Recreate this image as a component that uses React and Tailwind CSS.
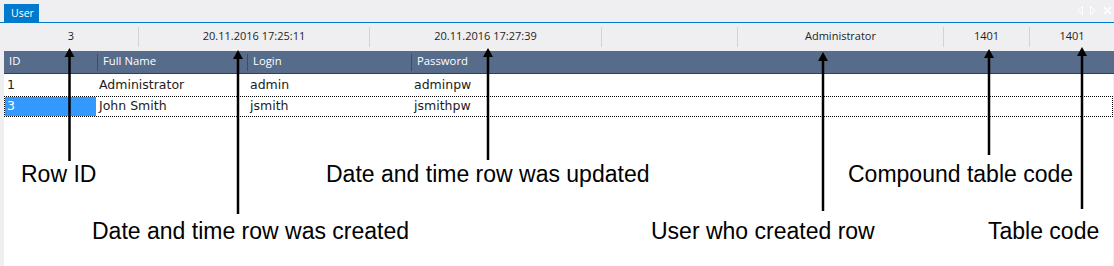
const statusCells = [
  { w: "w-[134px]", text: "3" },
  { w: "w-[231px]", text: "20.11.2016 17:25:11" },
  { w: "w-[232px]", text: "20.11.2016 17:27:39" },
  { w: "w-[136px]", text: "" },
  { w: "w-[206px]", text: "Administrator" },
  { w: "w-[86px]", text: "1401" },
  { w: "flex-1", text: "1401" },
];

const columns = [
  { title: "ID", w: "w-[93px]" },
  { title: "Full Name", w: "w-[150px]" },
  { title: "Login", w: "w-[164px]" },
  { title: "Password", w: "flex-1" },
];

const rows = [
  { id: "1", name: "Administrator", login: "admin", password: "adminpw" },
  { id: "3", name: "John Smith", login: "jsmith", password: "jsmithpw" },
];

// x, tip y, tail y
const arrows = [
  [69.5, 48, 161],
  [238, 50, 214],
  [488, 48, 160],
  [823, 52, 211],
  [989, 49, 155],
  [1082, 47, 209],
];

const labels = [
  { text: "Row ID", cls: "left-[21px] top-[163px]" },
  { text: "Date and time row was updated", cls: "left-[326px] top-[163px]" },
  { text: "Compound table code", cls: "left-[848px] top-[163px]" },
  { text: "Date and time row was created", cls: "left-[92px] top-[220px]" },
  { text: "User who created row", cls: "left-[651px] top-[220px]" },
  { text: "Table code", cls: "left-[988px] top-[220px]" },
];

function Arrows() {
  return (
    <svg className="absolute inset-0 pointer-events-none" width="1114" height="266">
      {arrows.map(([x, tip, tail]) => (
        <g key={x}>
          <line x1={x} y1={tip + 6} x2={x} y2={tail} stroke="#000" strokeWidth="2.5" />
          <polygon points={`${x},${tip} ${x - 5},${tip + 9} ${x + 5},${tip + 9}`} fill="#000" />
        </g>
      ))}
    </svg>
  );
}

export default function App() {
  return (
    <div className="relative w-[1114px] h-[266px] overflow-hidden bg-[#efeff2] flex flex-col font-['Open_Sans',sans-serif]">
      {/* tab strip */}
      <div className="h-[22px] flex items-start shrink-0">
        <div className="ml-[4px] mt-[4px] h-[18px] w-[35px] bg-[#007acc] text-white text-[10.5px] leading-[18px] pl-[7px]">
          User
        </div>
        <div className="ml-auto mr-[2px] mt-[6px] flex items-center gap-[7px] text-white">
          <svg width="6" height="9" viewBox="0 0 6 9">
            <polygon points="5.5,0.5 0.8,4.5 5.5,8.5" fill="none" stroke="#fff" strokeWidth="1" />
          </svg>
          <svg width="6" height="9" viewBox="0 0 6 9">
            <polygon points="0.5,0.5 5.2,4.5 0.5,8.5" fill="none" stroke="#fff" strokeWidth="1" />
          </svg>
          <svg width="9" height="9" viewBox="0 0 9 9">
            <path d="M1 1 L8 8 M8 1 L1 8" stroke="#fff" strokeWidth="1.6" />
          </svg>
        </div>
      </div>
      <div className="h-px bg-[#007acc] shrink-0" />

      {/* info strip */}
      <div className="h-[28px] flex items-center pl-[4px] shrink-0 text-[11px] text-[#1e1e1e]">
        {statusCells.map((c, i) => (
          <div key={i} className={`${c.w} flex items-center h-full`}>
            {i > 0 && <div className="w-px h-[20px] bg-[#d2d2d7]" />}
            <div className="flex-1 text-center pb-[1px]">{c.text}</div>
          </div>
        ))}
      </div>

      {/* grid */}
      <div className="flex-1 ml-[4px] flex flex-col">
        <div className="h-[23px] bg-[#576b8b] border-b border-[#2f405e] flex items-center text-white text-[11.3px] shrink-0">
          {columns.map((c, i) => (
            <div key={c.title} className={`${c.w} flex items-center h-full`}>
              {i > 0 && <div className="w-px h-[17px] bg-[#3c4d6b]" />}
              <span className="pl-[5px] pb-[2px]">{c.title}</span>
            </div>
          ))}
        </div>
        <div className="flex-1 bg-white mr-[1px] font-['DejaVu_Sans',sans-serif] text-[12.5px] text-[#1b1b1b]">
          <div className="h-[22px] flex items-center">
            <div className="w-[93px] pl-[3px]">{rows[0].id}</div>
            <div className="w-[150px] pl-[2px]">{rows[0].name}</div>
            <div className="w-[164px] pl-[3px]">{rows[0].login}</div>
            <div className="pl-[3px]">{rows[0].password}</div>
          </div>
          <div className="h-[21px] flex items-stretch border border-dotted border-black">
            <div className="w-[92px] flex">
              <div className="w-[91px] bg-[#3399ff] text-white pl-[2px] flex items-center">{rows[1].id}</div>
            </div>
            <div className="w-[150px] pl-[2px] flex items-center">{rows[1].name}</div>
            <div className="w-[164px] pl-[3px] flex items-center">{rows[1].login}</div>
            <div className="pl-[3px] flex items-center">{rows[1].password}</div>
          </div>
        </div>
      </div>

      {/* annotations */}
      <Arrows />
      {labels.map((l) => (
        <div
          key={l.text}
          className={`absolute ${l.cls} whitespace-nowrap text-[23px] leading-[23px] text-black font-['Liberation_Sans',Arial,sans-serif]`}
        >
          {l.text}
        </div>
      ))}
    </div>
  );
}
